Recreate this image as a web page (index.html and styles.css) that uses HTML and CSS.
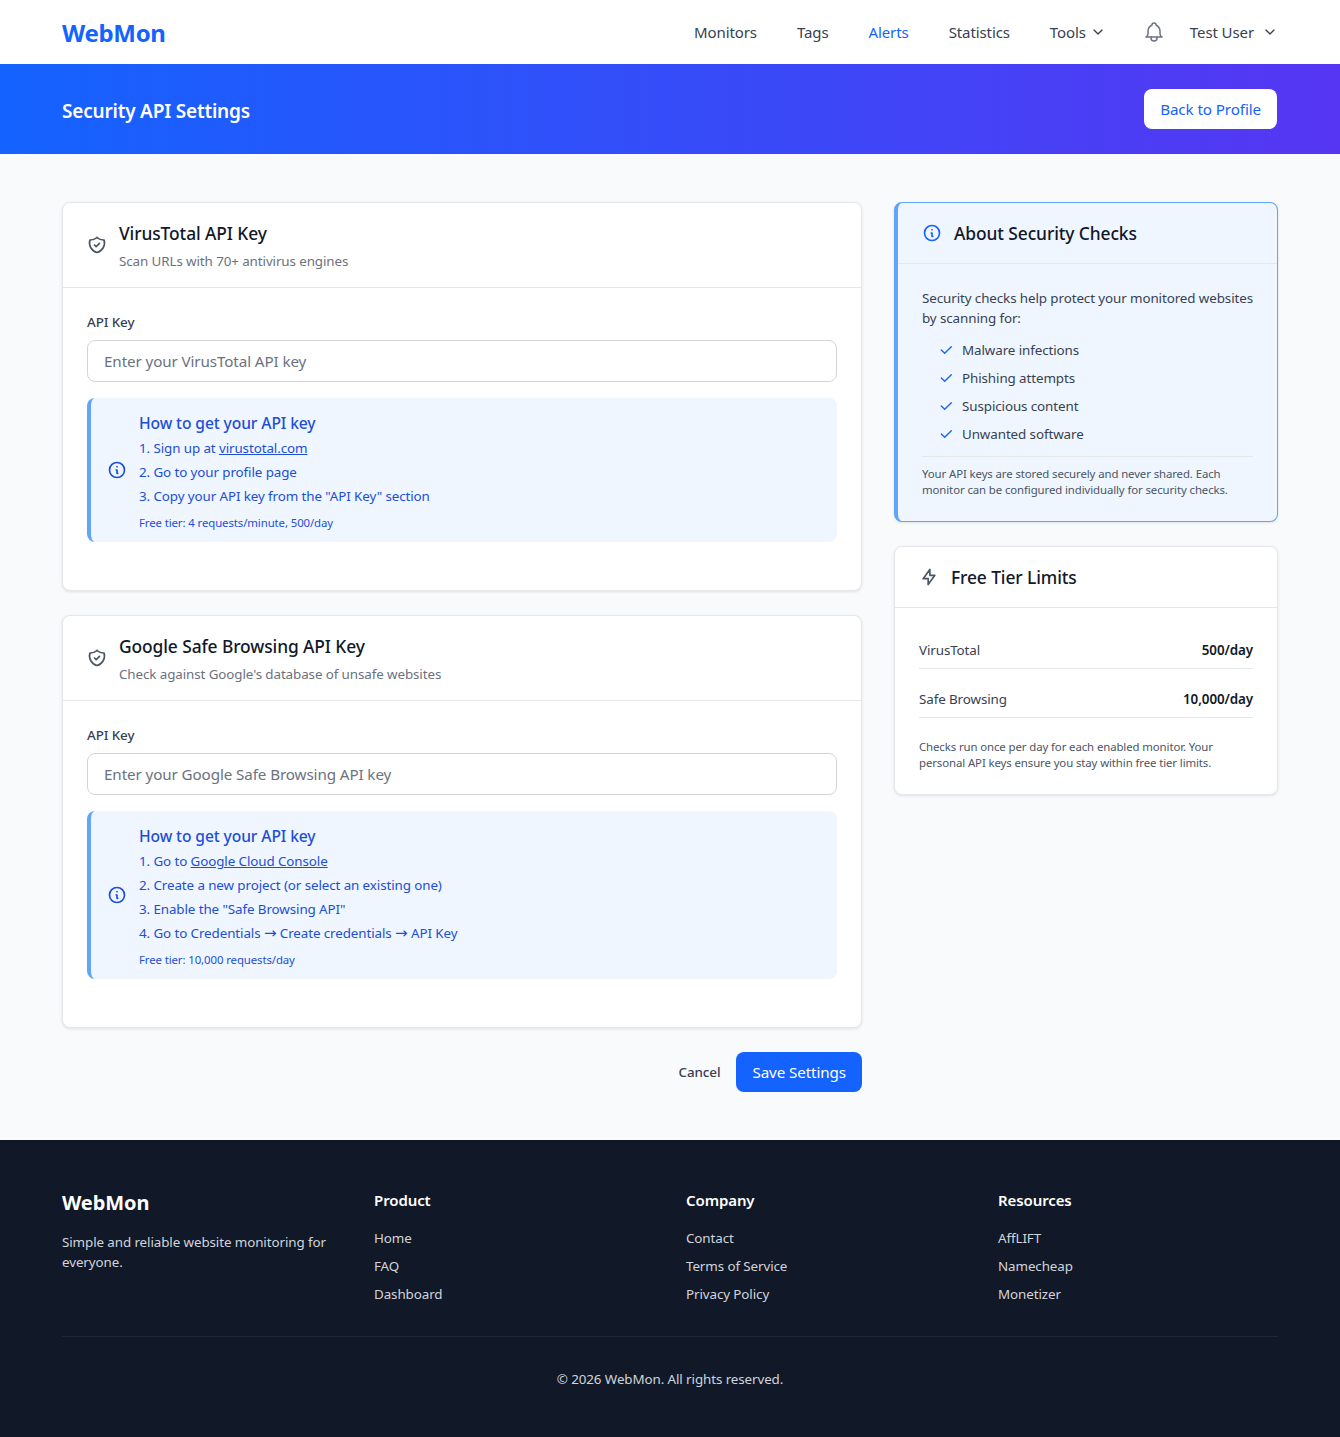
FILE: index.html
```html
<!DOCTYPE html>
<html lang="en">
<head>
  <meta charset="UTF-8">
  <title>Security API Settings - WebMon</title>
  <link rel="stylesheet" href="styles.css">
</head>
<body>

<svg class="sprite" xmlns="http://www.w3.org/2000/svg">
  <symbol id="i-shield" viewBox="0 0 24 24"><path d="M9 12l2 2l4 -4"/><path d="M12 3a12 12 0 0 0 8.5 3a12 12 0 0 1 -8.5 15a12 12 0 0 1 -8.5 -15a12 12 0 0 0 8.5 -3"/></symbol>
  <symbol id="i-info" viewBox="0 0 24 24"><circle cx="12" cy="12" r="9"/><path d="M12 8h.01"/><path d="M11 12h1v4h1"/></symbol>
  <symbol id="i-bell" viewBox="0 0 24 24"><path d="M10 5a2 2 0 1 1 4 0a7 7 0 0 1 4 6v3a4 4 0 0 0 2 3h-16a4 4 0 0 0 2 -3v-3a7 7 0 0 1 4 -6"/><path d="M9 17v1a3 3 0 0 0 6 0v-1"/></symbol>
  <symbol id="i-down" viewBox="0 0 24 24"><path d="M6 9l6 6l6 -6"/></symbol>
  <symbol id="i-check" viewBox="0 0 24 24"><path d="M5 12l5 5l10 -10"/></symbol>
  <symbol id="i-bolt" viewBox="0 0 24 24"><path d="M13 3v7h6l-8 11v-7h-6l8 -11"/></symbol>
</svg>

<!-- Navigation -->
<nav class="navbar">
  <a class="brand" href="#">WebMon</a>
  <div class="nav-links">
    <a href="#">Monitors</a>
    <a href="#">Tags</a>
    <a href="#" class="active">Alerts</a>
    <a href="#">Statistics</a>
    <a href="#" class="has-caret">Tools <svg class="icon caret"><use href="#i-down"/></svg></a>
    <svg class="icon bell"><use href="#i-bell"/></svg>
    <a href="#" class="has-caret user">Test User <svg class="icon caret"><use href="#i-down"/></svg></a>
  </div>
</nav>

<header class="banner">
  <h1>Security API Settings</h1>
  <a class="btn btn-white" href="#">Back to Profile</a>
</header>

<main class="page">
  <div class="left-col">

    <!-- VirusTotal -->
    <section class="card">
      <div class="card-head">
        <svg class="icon head-icon"><use href="#i-shield"/></svg>
        <div>
          <h2>VirusTotal API Key</h2>
          <p class="head-sub">Scan URLs with 70+ antivirus engines</p>
        </div>
      </div>
      <div class="card-body">
        <label class="field-label" for="vtKey">API Key</label>
        <input class="field" id="vtKey" type="text" placeholder="Enter your VirusTotal API key">
        <div class="help-box">
          <svg class="icon help-icon"><use href="#i-info"/></svg>
          <div>
            <div class="help-title">How to get your API key</div>
            <div class="help-step">1. Sign up at <a href="#">virustotal.com</a></div>
            <div class="help-step">2. Go to your profile page</div>
            <div class="help-step">3. Copy your API key from the "API Key" section</div>
            <div class="help-note">Free tier: 4 requests/minute, 500/day</div>
          </div>
        </div>
      </div>
    </section>

    <!-- Safe Browsing -->
    <section class="card">
      <div class="card-head">
        <svg class="icon head-icon"><use href="#i-shield"/></svg>
        <div>
          <h2>Google Safe Browsing API Key</h2>
          <p class="head-sub">Check against Google's database of unsafe websites</p>
        </div>
      </div>
      <div class="card-body">
        <label class="field-label" for="gsbKey">API Key</label>
        <input class="field" id="gsbKey" type="text" placeholder="Enter your Google Safe Browsing API key">
        <div class="help-box">
          <svg class="icon help-icon"><use href="#i-info"/></svg>
          <div>
            <div class="help-title">How to get your API key</div>
            <div class="help-step">1. Go to <a href="#">Google Cloud Console</a></div>
            <div class="help-step">2. Create a new project (or select an existing one)</div>
            <div class="help-step">3. Enable the "Safe Browsing API"</div>
            <div class="help-step">4. Go to Credentials <span class="arrow">→</span> Create credentials <span class="arrow">→</span> API Key</div>
            <div class="help-note">Free tier: 10,000 requests/day</div>
          </div>
        </div>
      </div>
    </section>

    <div class="form-actions">
      <a class="cancel" href="#">Cancel</a>
      <button class="btn btn-blue">Save Settings</button>
    </div>
  </div>

  <aside class="right-col">
    <section class="card card-about">
      <div class="side-head">
        <svg class="icon side-icon blue"><use href="#i-info"/></svg>
        <h3>About Security Checks</h3>
      </div>
      <div class="about-body">
        <p class="about-text">Security checks help protect your monitored websites by scanning for:</p>
        <ul class="check-list">
          <li><svg class="icon check"><use href="#i-check"/></svg>Malware infections</li>
          <li><svg class="icon check"><use href="#i-check"/></svg>Phishing attempts</li>
          <li><svg class="icon check"><use href="#i-check"/></svg>Suspicious content</li>
          <li><svg class="icon check"><use href="#i-check"/></svg>Unwanted software</li>
        </ul>
        <p class="small-note about-note">Your API keys are stored securely and never shared. Each monitor can be configured individually for security checks.</p>
      </div>
    </section>

    <section class="card">
      <div class="side-head">
        <svg class="icon side-icon"><use href="#i-bolt"/></svg>
        <h3>Free Tier Limits</h3>
      </div>
      <div class="limits-body">
        <div class="limit-row"><span>VirusTotal</span><strong>500/day</strong></div>
        <div class="limit-row"><span>Safe Browsing</span><strong>10,000/day</strong></div>
        <p class="small-note">Checks run once per day for each enabled monitor. Your personal API keys ensure you stay within free tier limits.</p>
      </div>
    </section>
  </aside>
</main>

<footer class="footer">
  <div class="footer-cols">
    <div>
      <div class="footer-brand">WebMon</div>
      <p class="footer-about">Simple and reliable website monitoring for everyone.</p>
    </div>
    <div>
      <h4>Product</h4>
      <a href="#">Home</a>
      <a href="#">FAQ</a>
      <a href="#">Dashboard</a>
    </div>
    <div>
      <h4>Company</h4>
      <a href="#">Contact</a>
      <a href="#">Terms of Service</a>
      <a href="#">Privacy Policy</a>
    </div>
    <div>
      <h4>Resources</h4>
      <a href="#">AffLIFT</a>
      <a href="#">Namecheap</a>
      <a href="#">Monetizer</a>
    </div>
  </div>
  <div class="copyright">© 2026 WebMon. All rights reserved.</div>
</footer>

</body>
</html>
```

FILE: styles.css
```css
* {
  box-sizing: border-box;
}
body {
  margin: 0;
  font-family: "Noto Sans", Arial, sans-serif;
  font-size: 13.4px;
  letter-spacing: -0.1px;
  color: #111827;
  background-color: #f9fafb;
}
a {
  color: inherit;
  text-decoration: none;
}
h1, h2, h3, h4, p, ul {
  margin: 0;
  padding: 0;
}
.sprite {
  display: none;
}
.icon {
  fill: none;
  stroke: currentColor;
  stroke-width: 2;
  stroke-linecap: round;
  stroke-linejoin: round;
  flex-shrink: 0;
}

/* nav */
.navbar {
  height: 64px;
  padding: 0 62px;
  display: flex;
  align-items: center;
  justify-content: space-between;
  background: white;
}
.brand {
  font-size: 24px;
  line-height: 32px;
  margin-top: 2px;
  font-weight: 700;
  letter-spacing: -0.3px;
  color: #1463ff;
}
.nav-links {
  display: flex;
  align-items: center;
  font-size: 15px;
  color: #374151;
  height: 24px;
}
.nav-links a {
  margin-right: 40px;
}
.nav-links .active {
  color: #1463ff;
}
.has-caret {
  display: flex;
  align-items: center;
}
.caret {
  width: 16px;
  height: 16px;
  margin-left: 4px;
}
.nav-links .has-caret {
  margin-right: 36px;
}
.nav-links .user {
  margin-right: 0;
}
.user .caret {
  margin-left: 8px;
}
.bell {
  width: 24px;
  height: 24px;
  margin-right: 24px;
  stroke-width: 1.5;
  color: #6b7280;
}

/* banner */
.banner {
  height: 90px;
  padding: 0 62px;
  display: flex;
  align-items: center;
  justify-content: space-between;
  background: linear-gradient(90deg, #1463ff, #5636f3);
}
.banner h1 {
  margin-top: 4px;
  font-size: 19px;
  letter-spacing: -0.2px;
  font-weight: 600;
  color: white;
}
.btn {
  display: block;
  height: 40px;
  padding: 0 16px;
  border: none;
  border-radius: 8px;
  font-family: inherit;
  font-size: 15.2px;
  letter-spacing: -0.1px;
  line-height: 40px;
}
.btn-white {
  margin-right: 1px;
  background: white;
  color: #1463ff;
}
.btn-blue {
  background: #1463ff;
  color: white;
  cursor: pointer;
}

/* layout */
.page {
  padding: 48px 62px;
  display: grid;
  grid-template-columns: 800px 384px;
  gap: 32px;
  align-items: start;
}
.left-col, .right-col {
  display: flex;
  flex-direction: column;
  gap: 24px;
}
.card {
  background: white;
  border: 1px solid #e5e7eb;
  border-radius: 8px;
  box-shadow: 0 1px 3px rgba(0,0,0,0.1);
}
.card-head {
  height: 85px;
  padding: 0 24px;
  display: flex;
  align-items: center;
  gap: 12px;
  border-bottom: 1px solid #e5e7eb;
}
.card-head h2 {
  font-size: 17.4px;
  line-height: 28px;
  font-weight: 500;
}
.head-sub {
  margin-top: 4px;
  margin-bottom: 1px;
  line-height: 20px;
  color: #6b7280;
}
.head-icon {
  width: 20px;
  height: 20px;
  color: #4b5563;
}
.card-body {
  padding: 24px 24px 48px;
}
.field-label {
  display: block;
  line-height: 20px;
  font-weight: 500;
  color: #374151;
  margin-bottom: 8px;
}
.field {
  display: block;
  width: 100%;
  height: 42px;
  padding: 0 16px;
  border: 1px solid #d1d5db;
  border-radius: 8px;
  font-family: inherit;
  font-size: 15.2px;
  letter-spacing: -0.1px;
  background: white;
}
.field::placeholder {
  color: #6b7280;
}

/* help box */
.help-box {
  margin-top: 16px;
  padding: 12px 16px 10px;
  display: flex;
  align-items: center;
  gap: 12px;
  background: #eff6ff;
  border-left: 4px solid #60a5fa;
  border-radius: 8px;
  color: #1d4ed8;
}
.help-icon {
  width: 20px;
  height: 20px;
  margin-top: -2px;
}
.help-title {
  font-size: 15.6px;
  line-height: 26px;
  font-weight: 500;
}
.help-step {
  line-height: 24px;
}
.help-step a {
  text-decoration: underline;
}
.arrow {
  font-family: "DejaVu Sans", sans-serif;
  font-size: 15px;
  line-height: 1;
  letter-spacing: 0;
}
.help-note {
  margin-top: 6px;
  font-size: 11.4px;
  line-height: 18px;
}

/* actions */
.form-actions {
  display: flex;
  justify-content: flex-end;
  align-items: center;
  gap: 16px;
}
.cancel {
  font-weight: 500;
  color: #374151;
}

/* sidebar */
.card-about {
  background: #eff6ff;
  border: 1px solid #60a5fa;
  border-left-width: 4px;
}
.side-head {
  height: 61px;
  padding: 0 24px;
  display: flex;
  align-items: center;
  gap: 12px;
  border-bottom: 1px solid #e5e7eb;
}
.side-head h3 {
  font-size: 17.4px;
  font-weight: 500;
}
.side-icon {
  width: 20px;
  height: 20px;
  color: #4b5563;
}
.side-icon.blue {
  color: #1463ff;
}
.about-body {
  padding: 24px 20px 23px 24px;
}
.about-text {
  line-height: 20px;
  color: #374151;
}
.check-list {
  list-style: none;
  margin-top: 8px;
  padding-left: 16px;
  color: #374151;
}
.check-list li {
  height: 28px;
  display: flex;
  align-items: center;
  gap: 8px;
}
.check {
  width: 16px;
  height: 16px;
  color: #1463ff;
}
.small-note {
  font-size: 11.4px;
  line-height: 16px;
  color: #4b5563;
}
.about-note {
  margin-top: 8px;
  margin-right: 4px;
  padding-top: 9px;
  border-top: 1px solid #e5e7eb;
}
.limits-body {
  padding: 12px 24px 23px;
}
.limit-row {
  height: 49px;
  padding-bottom: 8px;
  display: flex;
  align-items: flex-end;
  justify-content: space-between;
  line-height: 20px;
  border-bottom: 1px solid #e5e7eb;
  color: #374151;
}
.limit-row strong {
  font-weight: 600;
  color: #111827;
}
.limits-body .small-note {
  margin-top: 21px;
}

/* footer */
.footer {
  height: 297px;
  padding: 48px 62px 0;
  background: #111827;
  color: #d1d5db;
}
.footer-cols {
  display: grid;
  grid-template-columns: repeat(4, 1fr);
  gap: 32px;
  padding-bottom: 24px;
  border-bottom: 1px solid #1f2937;
}
.footer-brand {
  font-size: 20px;
  line-height: 28px;
  margin-top: 1px;
  font-weight: 700;
  color: white;
}
.footer-about {
  margin-top: 15px;
  line-height: 20px;
}
.footer h4 {
  font-size: 15px;
  line-height: 24px;
  font-weight: 600;
  color: white;
  margin-bottom: 16px;
}
.footer-cols a {
  display: block;
  line-height: 20px;
  margin-bottom: 8px;
}
.copyright {
  margin-top: 32px;
  text-align: center;
  line-height: 20px;
}
```
